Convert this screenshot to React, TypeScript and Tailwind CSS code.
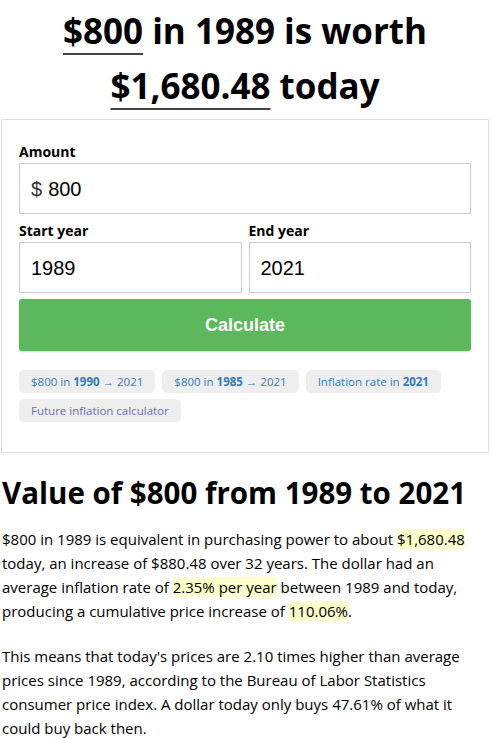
const chips: { pre: string; bold: string; post?: string }[] = [
  { pre: '$800 in ', bold: '1990', post: ' → 2021' },
  { pre: '$800 in ', bold: '1985', post: ' → 2021' },
  { pre: 'Inflation rate in ', bold: '2021' },
];

function Field({ label, value, prefix }: { label: string; value: string; prefix?: string }) {
  return (
    <label className="flex flex-col">
      <span className="mb-[3px] text-[14px] font-bold leading-[17px] text-black">{label}</span>
      <div className="flex h-[51px] items-center border border-[#ccc] bg-white px-[11px] font-['Liberation_Sans',Arial,sans-serif] text-[20px] text-black">
        {prefix && <span className="mr-[6px] text-[#333]">{prefix}</span>}
        <span>{value}</span>
      </div>
    </label>
  );
}

export default function App() {
  return (
    <div className="min-h-[738px] bg-white pl-[1px] pr-[3px] font-['Open_Sans','Noto_Sans',sans-serif] text-black">
      <h1 className="pt-[3px] text-center text-[35px] font-bold leading-[55px]">
        <span className="underline decoration-[#444] decoration-2 underline-offset-[9px]">$800</span> in 1989 is worth
        <br />
        <span className="underline decoration-[#444] decoration-2 underline-offset-[9px]">$1,680.48</span> today
      </h1>

      <div className="mt-[6px] border border-[#ddd] px-[17px] pb-[30px] pt-[23px]">
        <Field label="Amount" value="800" prefix="$" />
        <div className="mt-[8px] grid grid-cols-2 gap-[7px]">
          <Field label="Start year" value="1989" />
          <Field label="End year" value="2021" />
        </div>
        <button
          type="button"
          className="mt-[6px] flex h-[52px] w-full items-center justify-center rounded-[3px] bg-[#5cb85c] font-['Liberation_Sans',Arial,sans-serif] text-[18px] font-bold text-white shadow-[0_1px_2px_rgba(0,0,0,0.15)]"
        >
          Calculate
        </button>
        <div className="mt-[19px] flex flex-wrap gap-x-[7px] gap-y-[6px]">
          {chips.map((c) => (
            <a
              key={c.pre + c.bold}
              className="rounded-[5px] bg-[#eee] px-[12px] text-[11.5px] leading-[23px] text-[#337ab7]"
            >
              {c.pre}
              <b>{c.bold}</b>
              {c.post}
            </a>
          ))}
          <a className="rounded-[5px] bg-[#eee] px-[12px] text-[11.5px] leading-[23px] text-[#6a6fb0]">
            Future inflation calculator
          </a>
        </div>
      </div>

      <h2 className="mt-[22px] px-[1px] text-[29.5px] font-bold leading-[36px]">Value of $800 from 1989 to 2021</h2>

      <p className="mt-[16px] px-[1px] text-[15px] leading-[24px]">
        $800 in 1989 is equivalent in purchasing power to about{' '}
        <span className="bg-[#ffc]">$1,680.48</span> today, an increase of $880.48 over 32 years. The dollar had an
        average inflation rate of <span className="bg-[#ffc]">2.35% per year</span> between 1989 and today,
        producing a cumulative price increase of <span className="bg-[#ffc]">110.06%</span>.
      </p>
      <p className="mt-[21px] px-[1px] text-[15px] leading-[24px]">
        This means that today's prices are 2.10 times higher than average prices since 1989, according to the
        Bureau of Labor Statistics consumer price index. A dollar today only buys 47.61% of what it could buy back
        then.
      </p>
    </div>
  );
}
